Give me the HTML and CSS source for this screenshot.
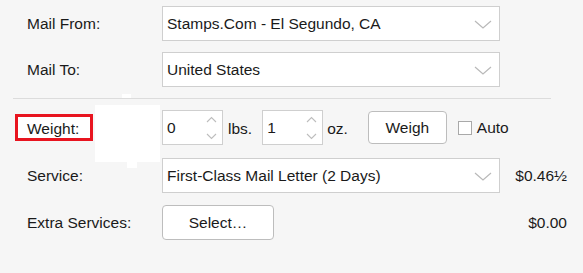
FILE: index.html
```html
<!DOCTYPE html>
<html lang="en">
<head>
    <meta charset="UTF-8">
    <title>Postage</title>
    <link rel="stylesheet" href="styles.css">
</head>
<body>
    <div class="panel">
        <div class="row">
            <div class="label">Mail From:</div>
            <div class="select">
                <span>Stamps.Com - El Segundo, CA</span>
                <svg class="chev" width="18" height="9" viewBox="0 0 18 9"><path d="M1 1 L9 8 L17 1" fill="none" stroke="#b9b9b9" stroke-width="1.2"/></svg>
            </div>
        </div>
        <div class="row">
            <div class="label">Mail To:</div>
            <div class="select">
                <span>United States</span>
                <svg class="chev" width="18" height="9" viewBox="0 0 18 9"><path d="M1 1 L9 8 L17 1" fill="none" stroke="#b9b9b9" stroke-width="1.2"/></svg>
            </div>
        </div>

        <div class="divider"></div>

        <div class="row row-weight">
            <div class="label"><span class="marked">Weight:</span></div>
            <div class="spin">
                <span>0</span>
                <svg class="arrows" width="11" height="24" viewBox="0 0 11 24"><path d="M1 6 L5.5 1.5 L10 6 M1 18 L5.5 22.5 L10 18" fill="none" stroke="#bdbdbd" stroke-width="1.1"/></svg>
            </div>
            <span class="unit">lbs.</span>
            <div class="spin">
                <span>1</span>
                <svg class="arrows" width="11" height="24" viewBox="0 0 11 24"><path d="M1 6 L5.5 1.5 L10 6 M1 18 L5.5 22.5 L10 18" fill="none" stroke="#bdbdbd" stroke-width="1.1"/></svg>
            </div>
            <span class="unit unit-oz">oz.</span>
            <button class="btn btn-weigh">Weigh</button>
            <span class="check"></span>
            <span class="check-label">Auto</span>
        </div>
        <div class="row row-service">
            <div class="label">Service:</div>
            <div class="select">
                <span>First-Class Mail Letter (2 Days)</span>
                <svg class="chev" width="18" height="9" viewBox="0 0 18 9"><path d="M1 1 L9 8 L17 1" fill="none" stroke="#b9b9b9" stroke-width="1.2"/></svg>
            </div>
            <div class="price">$0.46½</div>
        </div>
        <div class="row">
            <div class="label">Extra Services:</div>
            <button class="btn btn-select">Select…</button>
            <div class="price">$0.00</div>
        </div>

        <!-- redacted patch over the weight row -->
        <div class="patch"></div>
        <div class="patch-tab"></div>
        <div class="patch-top"></div>
    </div>
</body>
</html>
```

FILE: styles.css
```css
* {
    margin: 0;
    padding: 0;
    box-sizing: border-box;
}

body {
    font-family: Helvetica, "Liberation Sans", Arial, sans-serif;
    font-size: 15.5px;
    color: #1a1a1a;
    background-color: #f6f6f6;
}

.panel {
    position: relative;
    width: 583px;
    height: 273px;
    padding: 6px 16px 0 0;
}

.row {
    display: flex;
    align-items: center;
    height: 35px;
    margin-bottom: 11px;
}

.row-weight {
    margin-bottom: 13px;
}

.row-service {
    margin-bottom: 12px;
}

.label {
    width: 162px;
    padding-left: 27px;
    flex-shrink: 0;
}

.select {
    width: 338px;
    height: 35px;
    display: flex;
    align-items: center;
    justify-content: space-between;
    padding: 0 7px 0 4px;
    background: #fff;
    border: 1px solid #cfcfcf;
}

.chev {
    display: block;
    margin-top: 1px;
}

.divider {
    height: 1px;
    margin: 2px 16px 11px 13px;
    background: #dcdcdc;
}

.marked {
    display: inline-block;
    margin-left: -12px;
    padding: 1px 11px 0 9px;
    height: 27px;
    line-height: 22px;
    background: #fff;
    border: 3px solid #e8141f;
}

.spin {
    width: 61px;
    height: 35px;
    display: flex;
    align-items: center;
    justify-content: space-between;
    padding: 0 5px 0 4px;
    background: #fff;
    border: 1px solid #cfcfcf;
}

.arrows {
    display: block;
}

.unit {
    margin: 0 10px 0 5px;
    padding-top: 2px;
}

.unit-oz {
    margin-left: 4px;
    margin-right: 20px;
}

.btn {
    height: 35px;
    font-family: inherit;
    font-size: 15.5px;
    color: #1a1a1a;
    background: #fff;
    border: 1px solid #bdbdbd;
    border-radius: 4px;
}

.btn-weigh {
    width: 79px;
    height: 33px;
}

.btn-select {
    width: 112px;
}

.check {
    width: 14px;
    height: 14px;
    margin: 0 5px 0 11px;
    background: #fff;
    border: 1px solid #a9a9a9;
}

.price {
    margin-left: auto;
}

.patch {
    position: absolute;
    left: 95px;
    top: 105px;
    width: 65px;
    height: 57px;
    background: #fff;
}

.patch-tab {
    position: absolute;
    left: 127px;
    top: 160px;
    width: 10px;
    height: 8px;
    background: #fff;
}

.patch-top {
    position: absolute;
    left: 122px;
    top: 94px;
    width: 9px;
    height: 4px;
    background: #fff;
}
```
